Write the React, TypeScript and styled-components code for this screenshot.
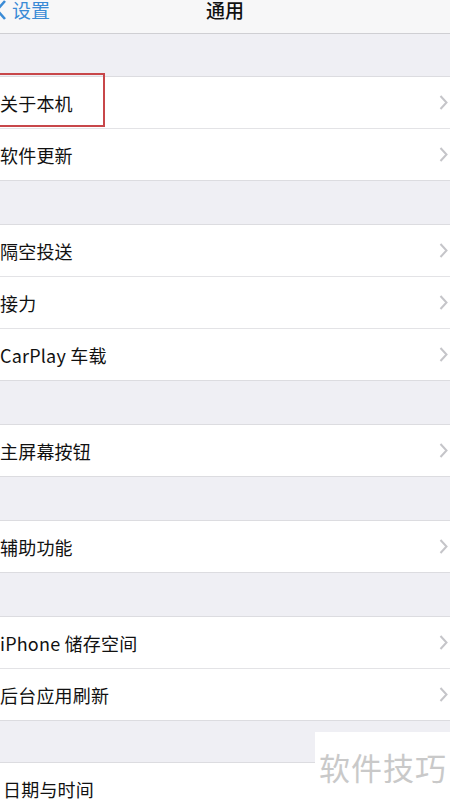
import React from "react";
import styled, { createGlobalStyle } from "styled-components";

const GlobalStyle = createGlobalStyle`
  html, body {
    margin: 0;
    padding: 0;
    background: #efeff4;
  }
  body {
    font-family: "Noto Sans CJK SC", "Noto Sans", sans-serif;
  }
`;

const SECTIONS: string[][] = [
  ["关于本机", "软件更新"],
  ["隔空投送", "接力", "CarPlay 车载"],
  ["主屏幕按钮"],
  ["辅助功能"],
  ["iPhone 储存空间", "后台应用刷新"],
  ["日期与时间"],
];

const Page = styled.div`
  position: relative;
  width: 450px;
  height: 800px;
  overflow: hidden;
  background: #efeff4;
  display: flex;
  flex-direction: column;
`;

const NavBar = styled.div`
  position: relative;
  height: 33px;
  flex-shrink: 0;
  background: #f7f7f8;
  border-bottom: 1px solid #cfcfd3;
  display: flex;
  align-items: flex-start;
`;

const BackButton = styled.div`
  display: flex;
  align-items: flex-start;
  gap: 6px;
  color: #3a8bd6;
  font-size: 19px;
  line-height: 19px;
  margin-top: 0;
  margin-left: -5px;
`;

const Title = styled.div`
  position: absolute;
  left: 0;
  right: 0;
  top: 0;
  text-align: center;
  font-size: 19px;
  line-height: 19px;
  font-weight: 500;
  color: #111;
`;

const Gap = styled.div<{ $h: number }>`
  height: ${(p) => p.$h}px;
  flex-shrink: 0;
`;

const Group = styled.div`
  flex-shrink: 0;
  background: #fff;
  border-top: 1px solid #dcdce0;
  border-bottom: 1px solid #dcdce0;
`;

const Row = styled.div<{ $inset?: number }>`
  position: relative;
  height: 51px;
  display: flex;
  align-items: center;
  justify-content: space-between;
  padding-left: ${(p) => p.$inset ?? 0}px;
  padding-right: 2px;
  & + & {
    border-top: 1px solid #e3e3e6;
  }
`;

const Label = styled.span`
  font-size: 18px;
  color: #111;
  letter-spacing: 0.2px;
`;

const Highlight = styled.div`
  position: absolute;
  left: -4px;
  top: -4px;
  width: 105px;
  height: 50px;
  border: 2px solid #c8474a;
`;

const Watermark = styled.div`
  position: absolute;
  left: 315px;
  top: 732px;
  width: 135px;
  height: 68px;
  background: #fff;
  display: flex;
  align-items: center;
  padding-left: 4px;
  box-sizing: border-box;
  font-size: 31px;
  color: #c9c9c9;
  letter-spacing: 1px;
`;

const Chevron = () => (
  <svg width="9" height="15" viewBox="0 0 9 15">
    <polyline
      points="1.5,1 7.5,7.5 1.5,14"
      fill="none"
      stroke="#c5c5c9"
      strokeWidth="2"
    />
  </svg>
);

const BackChevron = () => (
  <svg width="11" height="20" viewBox="0 0 11 20">
    <polyline
      points="10,1 2,10 10,19"
      fill="none"
      stroke="#3a8bd6"
      strokeWidth="2.6"
    />
  </svg>
);

const App = () => {
  return (
    <>
      <GlobalStyle />
      <Page>
        <NavBar>
          <BackButton>
            <BackChevron />
            <span>设置</span>
          </BackButton>
          <Title>通用</Title>
        </NavBar>
        {SECTIONS.map((items, si) => (
          <React.Fragment key={si}>
            <Gap $h={si === 0 ? 42 : si === SECTIONS.length - 1 ? 41 : 43} />
            <Group>
              {items.map((label, i) => (
                <Row key={label} $inset={si === SECTIONS.length - 1 ? 3 : 0}>
                  <Label>{label}</Label>
                  <Chevron />
                  {si === 0 && i === 0 && <Highlight />}
                </Row>
              ))}
            </Group>
          </React.Fragment>
        ))}
        <Watermark>软件技巧</Watermark>
      </Page>
    </>
  );
};

export default App;
